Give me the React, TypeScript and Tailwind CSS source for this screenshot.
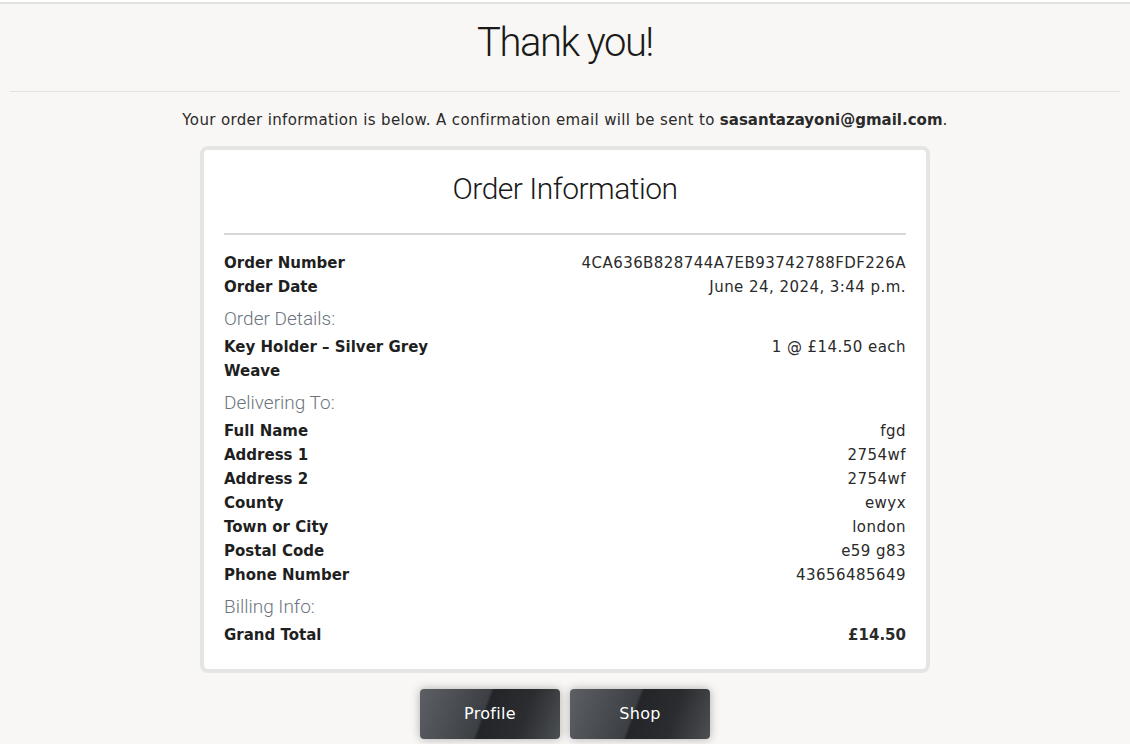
const rowsTop = [
    { label: 'Order Number', value: '4CA636B828744A7EB93742788FDF226A' },
    { label: 'Order Date', value: 'June 24, 2024, 3:44 p.m.' },
];

const delivery = [
    { label: 'Full Name', value: 'fgd' },
    { label: 'Address 1', value: '2754wf' },
    { label: 'Address 2', value: '2754wf' },
    { label: 'County', value: 'ewyx' },
    { label: 'Town or City', value: 'london' },
    { label: 'Postal Code', value: 'e59 g83' },
    { label: 'Phone Number', value: '43656485649' },
];

const body = "font-['DejaVu_Sans',sans-serif]";
const head = "font-['Roboto',sans-serif] font-light";

function Row({ label, value, boldValue }: { label: string; value: string; boldValue?: boolean }) {
    return (
        <div className="grid grid-cols-[230px_1fr] text-[15px] leading-6">
            <div className="font-bold text-[#1f1f1f]">{label}</div>
            <div className={`text-right text-[#2a2a2a] ${boldValue ? 'font-bold' : 'tracking-[0.45px]'}`}>{value}</div>
        </div>
    );
}

function SectionTitle({ children }: { children: string }) {
    return <p className={`${head} text-[19px] leading-8 text-[#6c757d] mt-1`}>{children}</p>;
}

function DarkButton({ children }: { children: string }) {
    return (
        <button className="relative w-[140px] h-[50px] rounded-[4px] overflow-hidden text-white text-[16px] tracking-[0.3px] shadow-[0_0_10px_rgba(0,0,0,0.3)] bg-[linear-gradient(110deg,#5c5f63_0%,#3c3f43_45%,#232528_47%,#2a2c2f_72%,#4c4f53_100%)]">
            {children}
        </button>
    );
}

export default function App() {
    return (
        <div className={`min-h-screen bg-[#f8f7f5] ${body} text-[#222]`}>
            <div className="border-t-2 border-[#e2e2e0] mt-[2px]" />
            <div className="mx-[10px] border-b border-[#e2e2e0] h-[88px] flex items-center justify-center">
                <h1 className={`${head} text-[40px] tracking-[-1.5px] text-[#1a1a1a] -mt-[9px]`}>Thank you!</h1>
            </div>
            <p className="text-center text-[15px] leading-6 mt-[16px] text-[#2a2a2a] tracking-[0.35px]">
                Your order information is below. A confirmation email will be sent to{' '}
                <strong className="font-bold tracking-normal">sasantazayoni@gmail.com</strong>.
            </p>
            <div className="flex flex-col items-center">
                <div className="mt-[14px] w-[730px] bg-white border-4 border-[#e5e5e3] rounded-[8px] px-5 pt-[19px] pb-[22px]">
                    <h2 className={`${head} text-[30px] tracking-[-0.5px] text-center text-[#1a1a1a] leading-[40px]`}>Order Information</h2>
                    <hr className="border-t-2 border-[#d6d6d6] mt-[24px] mb-[16px]" />
                    {rowsTop.map((r) => (
                        <Row key={r.label} {...r} />
                    ))}
                    <SectionTitle>Order Details:</SectionTitle>
                    <Row label="Key Holder – Silver Grey Weave" value="1 @ £14.50 each" />
                    <SectionTitle>Delivering To:</SectionTitle>
                    {delivery.map((r) => (
                        <Row key={r.label} {...r} />
                    ))}
                    <SectionTitle>Billing Info:</SectionTitle>
                    <Row label="Grand Total" value="£14.50" boldValue />
                </div>
                <div className="flex gap-[10px] mt-[16px] mb-4">
                    <DarkButton>Profile</DarkButton>
                    <DarkButton>Shop</DarkButton>
                </div>
            </div>
        </div>
    );
}
